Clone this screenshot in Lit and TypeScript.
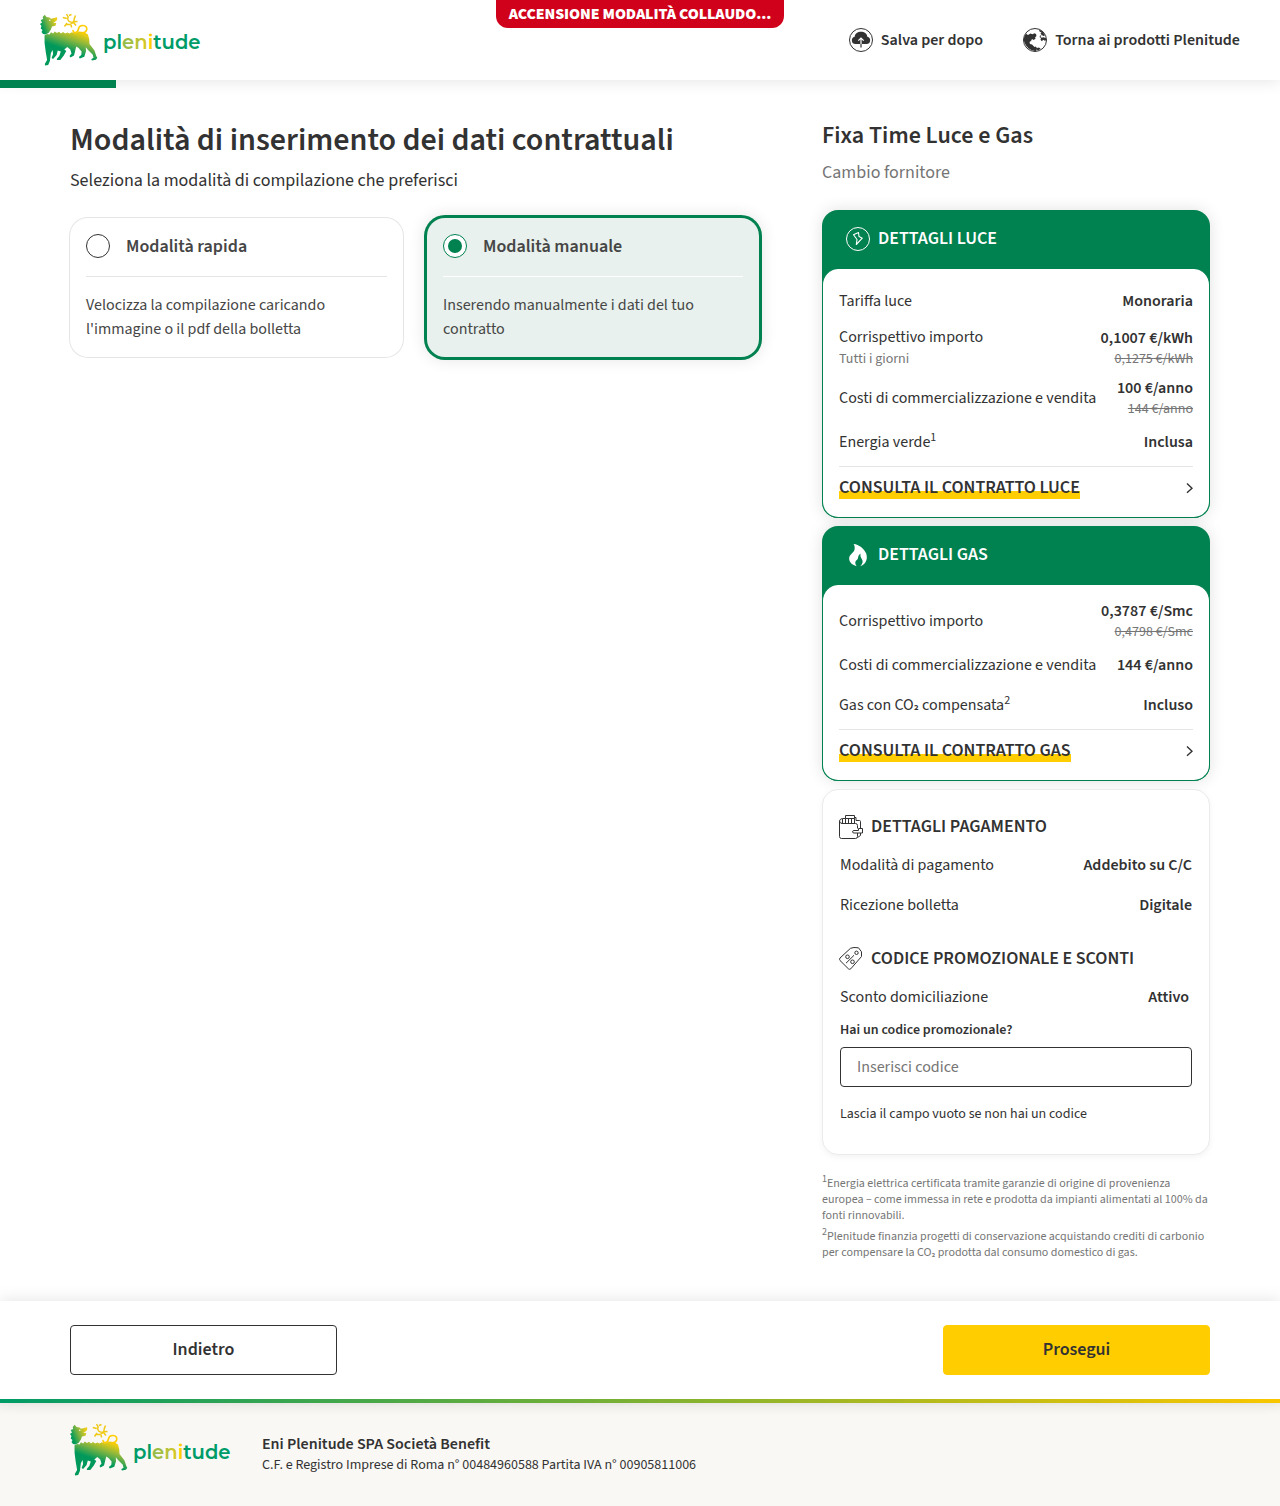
import { LitElement, html, css } from "lit";
import { customElement, state } from "lit/decorators.js";
import { classMap } from "lit/directives/class-map.js";

@customElement("brand-logo")
export class BrandLogo extends LitElement {
  static styles = css`
    :host { display: block; width: 162px; height: 54px; }
    svg { display: block; overflow: visible; }
    .word { font-family: Montserrat, "Noto Sans", sans-serif; font-weight: 600; font-size: 21px; }
  `;
  render() {
    return html`<svg width="162" height="54" viewBox="0 0 162 54">
      <defs>
        <linearGradient id="h" gradientUnits="userSpaceOnUse" x1="2" y1="14" x2="16" y2="8"><stop offset="0" stop-color="#009b5a"/><stop offset=".5" stop-color="#7fb441"/><stop offset="1" stop-color="#e9cd18"/></linearGradient>
        <linearGradient id="b" gradientUnits="userSpaceOnUse" x1="44" y1="18" x2="35" y2="43"><stop offset="0" stop-color="#ffce00"/><stop offset=".15" stop-color="#e6cc14"/><stop offset=".5" stop-color="#7fb441"/><stop offset=".9" stop-color="#00995b"/></linearGradient>
        <linearGradient id="t" gradientUnits="userSpaceOnUse" x1="0" y1="0" x2="160" y2="0"><stop offset=".505" stop-color="#009b66"/><stop offset=".505" stop-color="#8dba4b"/><stop offset=".58" stop-color="#a5be40"/><stop offset=".66" stop-color="#d5c826"/><stop offset=".68" stop-color="#ffcd00"/><stop offset=".705" stop-color="#ffcd00"/><stop offset=".705" stop-color="#009b66"/></linearGradient>
      </defs>
      <path fill="url(#h)" d="M4.700 1.800 6.500 4l3 .5 1.500 1.200 6-1.400.3 1.700-1 2-3 1.700 3 .3-.8 2.800-3.500.7-1.200 3.200-2.300 3.300-3.200 1.500-2.300-.5L1.500 19l1-2-1.800-1.500L1.500 13 0 11l2-1.500L.7 7l2.500-1L2.700 4z"/>
      <circle cx="9.800" cy="7.300" r=".7" fill="#fff"/>
      <path fill="url(#b)" d="M4.500 22.500 7 21l2.500.5 1.500-2.200 2.200 1.200 1.600-2 2.200 1.500 2-1.200 2 1.600 2-1.300 2.200 1.300 2.200-1 2 1 2.500-1.200 3 1 4-1.700 5 .5 4 2.500 1.300 4.500.3 5 5 6.500 1.800 5.500 1 2-1.500 1.700-3.800.8-.8-1.200 2.300-1.500-.7-3-4.500-4.500-2.500-3 .2 4-1.700 5.500-4.500 1.800-1-1.500 2.500-2 .3-3.500-3-3.500-2.300-1.500-.8 3-1.500 6-3.500 2-1-1.500 2-2.500-1.200-4-3-2.500-3 2.500 2 1.500-2.500 4.500-3.500 4.300-3.500.2.300-1.700 2.200-2.300 1.500-4.500-3-1-1.200 4.500-3.500 4-1.500-1 1.500-4-.5-4-1.700 3-1 8-1.700 4-3.100.5-.3-1.500 2.300-4-1.500-9-1-8z"/>
      <path fill="none" stroke="#ffcd00" stroke-width="1.600" stroke-linecap="round" d="M33 17.500q.3 2.500 2.800 2 2.200-.6 2.700-3.500.8-3.700 4.500-3.500 4.300.5 3.700 4.200-.7 2.700-4.200 3.300"/>
      <path fill="none" stroke="#efc916" stroke-width="1.500" d="M28 3.500q-1.800 6 6 6M34.500 4.500q-.3 8-8.500 7M22.800 4.500l4 1M26.500 1l2 3.500M31.500 1.500l-2.500 1M35.500 2.500l-1.500 4M37.500 8.500l-4 .3M36 12.500l-3-3.500M31.500 14.500l-.5-4M24.500 13.500l2.500-3.500"/>
      <text class="word" x="63" y="35.600" fill="url(#t)" textLength="97.500" lengthAdjust="spacingAndGlyphs">plenitude</text>
    </svg>`;
  }
}

interface Row { label: unknown; sub?: string; value: string; old?: string }

const sharedText = css`
  .row { display: flex; justify-content: space-between; align-items: center; height: 40px; font-size: 16px; line-height: 20px; color: #323232; }
  .val { text-align: right; font-weight: 600; }
  sup { font-size: 12px; line-height: 0; vertical-align: 6px; }
  .sub2 { font-size: .85em; line-height: 0; vertical-align: .12em; font-weight: 600; }
`;

@customElement("offer-card")
export class OfferCard extends LitElement {
  static properties = { heading: {}, icon: {}, rows: {}, link: {} };
  declare heading: string;
  declare icon: unknown;
  declare rows: Row[];
  declare link: string;
  static styles = [sharedText, css`
    :host { display: block; background: #008150; border-radius: 16px; box-shadow: 0 0 16px rgba(0,0,0,.12); margin-bottom: 8px; }
    .head { display: flex; align-items: center; gap: 8px; height: 59px; padding: 0 24px 1px; color: #fff; font-size: 18px; line-height: 24px; font-weight: 600; box-sizing: border-box; }
    svg { display: block; }
    .body { background: #fff; border: 1px solid #008150; border-top: 0; border-radius: 16px; padding: 11px 16px 0; }
    .row.first { height: 42px; }
    .row.two { height: 49px; }
    .row.detailed { height: 51px; }
    .two .val { padding-top: 2px; }
    .detailed .name { padding-top: 2px; }
    .detailed .val { padding-top: 3px; }
    .sub, .old { color: #757575; font-weight: 400; font-size: 14px; line-height: 21px; }
    .sub { margin-top: 2px; }
    .old { margin-top: 1px; text-decoration: line-through; }
    .foot { border-top: 1px solid #e5e5e5; display: flex; justify-content: space-between; align-items: flex-start; height: 51px; box-sizing: border-box; padding-top: 9px; margin-top: 4px; }
    .foot svg { margin-top: 6px; }
    .link { font-size: 18px; font-weight: 600; line-height: 24px; height: 23px; color: #323232; background: linear-gradient(#ffcd00,#ffcd00) 0 100% / 100% 8px no-repeat; }
  `];
  render() {
    return html`<div class="head">${this.icon}<span>${this.heading}</span></div>
      <div class="body">
        ${this.rows.map((r, i) => html`<div class=${classMap({ row: true, first: i === 0, two: !!r.old, detailed: !!r.sub })}>
          <div class="name">${r.label}${r.sub ? html`<div class="sub">${r.sub}</div>` : ""}</div>
          <div class="val">${r.value}${r.old ? html`<div class="old">${r.old}</div>` : ""}</div>
        </div>`)}
        <div class="foot"><span class="link">${this.link}</span>
          <svg width="7" height="12" viewBox="0 0 7 12" fill="none" stroke="#323232" stroke-width="1.400"><path d="M1 1.500 6 6.200 1 10.800"/></svg>
        </div>
      </div>`;
  }
}

const boltIcon = html`<svg width="24" height="24" viewBox="0 0 24 24" fill="none" stroke="#fff"><circle cx="12" cy="12" r="11.500"/><path stroke-width="1.100" stroke-linejoin="round" d="M7.500 7.700 12.500 5.500l.5 4 3.300 1.700-6 6.300.7-5z"/></svg>`;
const flameIcon = html`<svg width="24" height="24" viewBox="0 0 24 24" fill="#fff"><path d="M7.600 1C13 1.500 18 5.500 20.200 10.500c1.600 5 .4 10.300-5.900 12.700 2.500-2.600 3-5 1.500-7.200-1.300-2-1.700-3.200-1.200-5.500-1.800 1.300-2.500 2.700-2.700 5-.5 1-1.200 1.300-2 2.300-1.300 1.800-.4 3.800.8 5.400C5.500 21.800 2.700 18.500 3.200 14.500c.5-2.500 2.700-4 4.300-5.800C9.300 6.500 9 3.300 7.600 1z"/></svg>`;
const walletIcon = html`<svg width="24" height="24" viewBox="0 0 24 24" fill="none" stroke="#323232"><path d="M3 8.500Q.5 8 .5 6 .5 4.500 3 3.500M.5 6v15.500q0 2 2 2h14q2 0 2-2V18M2.500 8.500h14q2 0 2 2v3M3.500 8.500V3.500h3V.5h9v3M6.500 3.500h9v5M6.500 3.500v5M9.500 3.500v5M12.500 3.500v5M15.500 2.500h1.500v3h3.500q1 0 1 1v7M21.500 18v2.500l-3 2M23.500 13.500v4.500h-8.500q-1.500 0-1.500-1.200t1.500-1.300h4.500v-2z"/></svg>`;
const tagIcon = html`<svg width="24" height="24" viewBox="0 0 24 24" fill="none" stroke="#323232"><path stroke-linejoin="round" d="M11.500 1.300 15 .5l4.500.3 3 4v4.700L11.800 21.800q-1.200 1-2.400 0L1 13.500q-1-1.200 0-2.500zM15 8.300 7 16.200"/><circle cx="17.500" cy="5.800" r="1.700"/><circle cx="8.500" cy="9.800" r="1.800"/><circle cx="13.500" cy="14.800" r="1.800"/></svg>`;
const cloudIcon = html`<svg width="24" height="24" viewBox="0 0 24 24"><circle cx="12" cy="12" r="11.500" fill="#fff" stroke="#323232"/><path fill="#323232" d="M6.500 16a3.700 3.700 0 0 1-.8-7.300C6 5.500 8.700 3.800 12 3.800s6 1.900 6.300 4.900a3.700 3.700 0 0 1-.8 7.300z"/><path fill="none" stroke="#fff" stroke-width="1.200" d="M12 10.500V16M9.300 12.700 12 10l2.700 2.700"/><path stroke="#323232" stroke-width="1.200" d="M12 16v3.500"/></svg>`;
const globeIcon = html`<svg width="24" height="24" viewBox="0 0 24 24"><circle cx="12" cy="12" r="11.500" fill="#fff" stroke="#323232"/><path fill="#323232" d="M.5 12Q1 8 3 5.800L5 7l2.500-1.500 2 .8 2-1 1.500.7.5 2-1.500 1.500.7 1-2 1.500L9 11l-1 2-1.500 1 .5 2 2 .5 2.500 2.500 1.500-.5 1 2-1 2.700Q4 23 .5 12zM16 1.500q4 1.500 6 6L20.500 8l-1.800-1-1.200 1.300 1 1.500 2-.6 2.500 1 .3 2-1.500.6-1.500-1-1.500 1.500-1.300-1.600.5-1.700-1.500-1 .7-1.500 1.500-.5-1.200-1.500 1-1-2-1z"/><path fill="#323232" d="M13 21l2-1.500 2 .5.5 1-2.500 1.500z"/></svg>`;

@customElement("app-root")
export class AppRoot extends LitElement {
  @state() private mode = "manuale";
  static styles = [sharedText, css`
    :host { display: block; font-family: "Source Sans Pro", "Source Sans 3", "Noto Sans CJK JP", sans-serif; color: #323232; background: #fff; }
    * { box-sizing: border-box; }
    svg { display: block; }
    h1, h2, p { margin: 0; }
    header { position: relative; display: flex; justify-content: space-between; align-items: flex-start; height: 80px; padding: 13px 40px 0; background: #fff; box-shadow: 0 0 16px rgba(0,0,0,.12); }
    .banner { position: absolute; top: 0; left: 496px; width: 288px; height: 28px; border-radius: 0 0 12px 12px; background: #d0021b; color: #fff; font-weight: 900; font-size: 16px; letter-spacing: -.1px; line-height: 28px; text-align: center; white-space: nowrap; }
    nav { display: flex; gap: 40px; padding-top: 15px; }
    nav div { display: flex; align-items: center; gap: 8px; font-size: 16px; line-height: 24px; font-weight: 600; }
    .progress { position: relative; width: 116px; height: 8px; background: #008150; }
    main { display: flex; justify-content: space-between; width: 1140px; margin: 0 auto; padding-top: 32px; height: 1213px; }
    .left { width: 690px; }
    h1 { font-size: 32px; line-height: 40px; font-weight: 600; }
    .lead { font-size: 18px; line-height: 24px; margin-top: 9px; }
    .modes { display: flex; gap: 24px; margin: 25px 1px 0 0; }
    .mode { width: 333px; height: 139px; padding: 16px; border-radius: 18px; color: #464646; box-shadow: 0 0 0 1px #e5e5e5; font-size: 16px; line-height: 24px; }
    .mode.on { width: 332px; background: #e8f1ed; box-shadow: 0 0 0 3px #008150, 0 0 16px 3px rgba(0,0,0,.1); }
    .pick { display: flex; align-items: center; gap: 16px; height: 43px; padding-bottom: 18px; border-bottom: 1px solid #e5e5e5; font-size: 18px; font-weight: 600; margin-bottom: 16px; }
    .pick span:last-child { padding-top: 2px; }
    .on .pick { border-color: #fff; }
    .radio { width: 24px; height: 24px; border: 1px solid #323232; border-radius: 50%; background: #fff; display: grid; place-items: center; }
    .on .radio { border-color: #008150; }
    .on .radio::after { content: ""; width: 14px; height: 14px; border-radius: 50%; background: #008150; }
    aside { width: 388px; }
    h2 { font-size: 24px; line-height: 30px; font-weight: 600; padding-top: 1px; }
    .kind { font-size: 18px; line-height: 24px; color: #757575; margin: 10px 0 25px; }
    .panel { height: 366px; border: 1px solid #ebebeb; border-radius: 16px; box-shadow: 0 2px 6px rgba(0,0,0,.05); padding: 25px 17px 0; background: #fff; }
    .title { display: flex; align-items: center; gap: 8px; height: 24px; font-size: 18px; line-height: 24px; font-weight: 600; margin-left: -1px; }
    .panel .title + .row { margin-top: 6px; }
    .title.promo { margin-top: 22px; }
    .promo + .row { padding-right: 3px; }
    .ask { font-size: 14px; line-height: 18px; font-weight: 600; margin-top: 4px; }
    input { display: block; width: 100%; height: 40px; margin: 8px 0 18px; border: 1px solid #323232; border-radius: 4px; padding: 0 16px; font: 400 16px/24px "Source Sans Pro", "Source Sans 3", "Noto Sans CJK JP", sans-serif; color: #323232; background: #fff; }
    input::placeholder { color: #757575; opacity: 1; }
    .hint { font-size: 14px; line-height: 18px; }
    .notes { font-size: 12px; line-height: 16px; color: #757575; margin-top: 21px; }
    .notes p + p { margin-top: 5px; }
    .notes sup { font-size: 10px; vertical-align: 5px; }
    .actions { position: relative; display: flex; justify-content: space-between; height: 98px; padding: 24px 70px; background: #fff; box-shadow: 0 0 16px rgba(0,0,0,.12); }
    button { width: 267px; height: 50px; border: 1px solid #323232; border-radius: 4px; background: #fff; color: #323232; font: 600 18px/24px "Source Sans Pro", "Source Sans 3", "Noto Sans CJK JP", sans-serif; padding: 0; }
    button.go { background: #ffcd00; border-color: #ffcd00; }
    .stripe { position: relative; height: 4px; background: linear-gradient(90deg,#009b66,#f9c600); }
    footer { display: flex; height: 103px; padding: 20px 70px 0; gap: 30px; background: linear-gradient(#f2f1ee, #f9f8f5 12px); }
    .corp { padding-top: 11px; font-size: 14px; line-height: 20px; }
    .corp strong { display: block; font-size: 16px; font-weight: 600; line-height: 20px; margin-bottom: 1px; }
  `];

  private modeCard(id: string, title: string, text: string) {
    const on = this.mode === id;
    return html`<div class=${classMap({ mode: true, on })} @click=${() => (this.mode = id)}>
      <div class="pick"><span class="radio"></span><span>${title}</span></div>${text}</div>`;
  }

  render() {
    const luce: Row[] = [
      { label: "Tariffa luce", value: "Monoraria" },
      { label: "Corrispettivo importo", sub: "Tutti i giorni", value: "0,1007 €/kWh", old: "0,1275 €/kWh" },
      { label: "Costi di commercializzazione e vendita", value: "100 €/anno", old: "144 €/anno" },
      { label: html`Energia verde<sup>1</sup>`, value: "Inclusa" },
    ];
    const gas: Row[] = [
      { label: "Corrispettivo importo", value: "0,3787 €/Smc", old: "0,4798 €/Smc" },
      { label: "Costi di commercializzazione e vendita", value: "144 €/anno" },
      { label: html`Gas con CO<span class="sub2">₂</span> compensata<sup>2</sup>`, value: "Incluso" },
    ];
    return html`
      <header>
        <brand-logo></brand-logo>
        <div class="banner">ACCENSIONE MODALITÀ COLLAUDO...</div>
        <nav><div>${cloudIcon}<span>Salva per dopo</span></div><div>${globeIcon}<span>Torna ai prodotti Plenitude</span></div></nav>
      </header>
      <div class="progress"></div>
      <main>
        <section class="left">
          <h1>Modalità di inserimento dei dati contrattuali</h1>
          <p class="lead">Seleziona la modalità di compilazione che preferisci</p>
          <div class="modes">
            ${this.modeCard("rapida", "Modalità rapida", "Velocizza la compilazione caricando l'immagine o il pdf della bolletta")}
            ${this.modeCard("manuale", "Modalità manuale", "Inserendo manualmente i dati del tuo contratto")}
          </div>
        </section>
        <aside>
          <h2>Fixa Time Luce e Gas</h2>
          <p class="kind">Cambio fornitore</p>
          <offer-card heading="DETTAGLI LUCE" link="CONSULTA IL CONTRATTO LUCE" .icon=${boltIcon} .rows=${luce}></offer-card>
          <offer-card heading="DETTAGLI GAS" link="CONSULTA IL CONTRATTO GAS" .icon=${flameIcon} .rows=${gas}></offer-card>
          <div class="panel">
            <div class="title">${walletIcon}<span>DETTAGLI PAGAMENTO</span></div>
            <div class="row"><div>Modalità di pagamento</div><div class="val">Addebito su C/C</div></div>
            <div class="row"><div>Ricezione bolletta</div><div class="val">Digitale</div></div>
            <div class="title promo">${tagIcon}<span>CODICE PROMOZIONALE E SCONTI</span></div>
            <div class="row"><div>Sconto domiciliazione</div><div class="val">Attivo</div></div>
            <p class="ask">Hai un codice promozionale?</p>
            <input placeholder="Inserisci codice">
            <p class="hint">Lascia il campo vuoto se non hai un codice</p>
          </div>
          <div class="notes">
            <p><sup>1</sup>Energia elettrica certificata tramite garanzie di origine di provenienza europea – come immessa in rete e prodotta da impianti alimentati al 100% da fonti rinnovabili.</p>
            <p><sup>2</sup>Plenitude finanzia progetti di conservazione acquistando crediti di carbonio per compensare la CO<span class="sub2">₂</span> prodotta dal consumo domestico di gas.</p>
          </div>
        </aside>
      </main>
      <div class="actions"><button>Indietro</button><button class="go">Prosegui</button></div>
      <div class="stripe"></div>
      <footer><brand-logo></brand-logo><div class="corp"><strong>Eni Plenitude SPA Società Benefit</strong>C.F. e Registro Imprese di Roma n° 00484960588 Partita IVA n° 00905811006</div></footer>
    `;
  }
}
